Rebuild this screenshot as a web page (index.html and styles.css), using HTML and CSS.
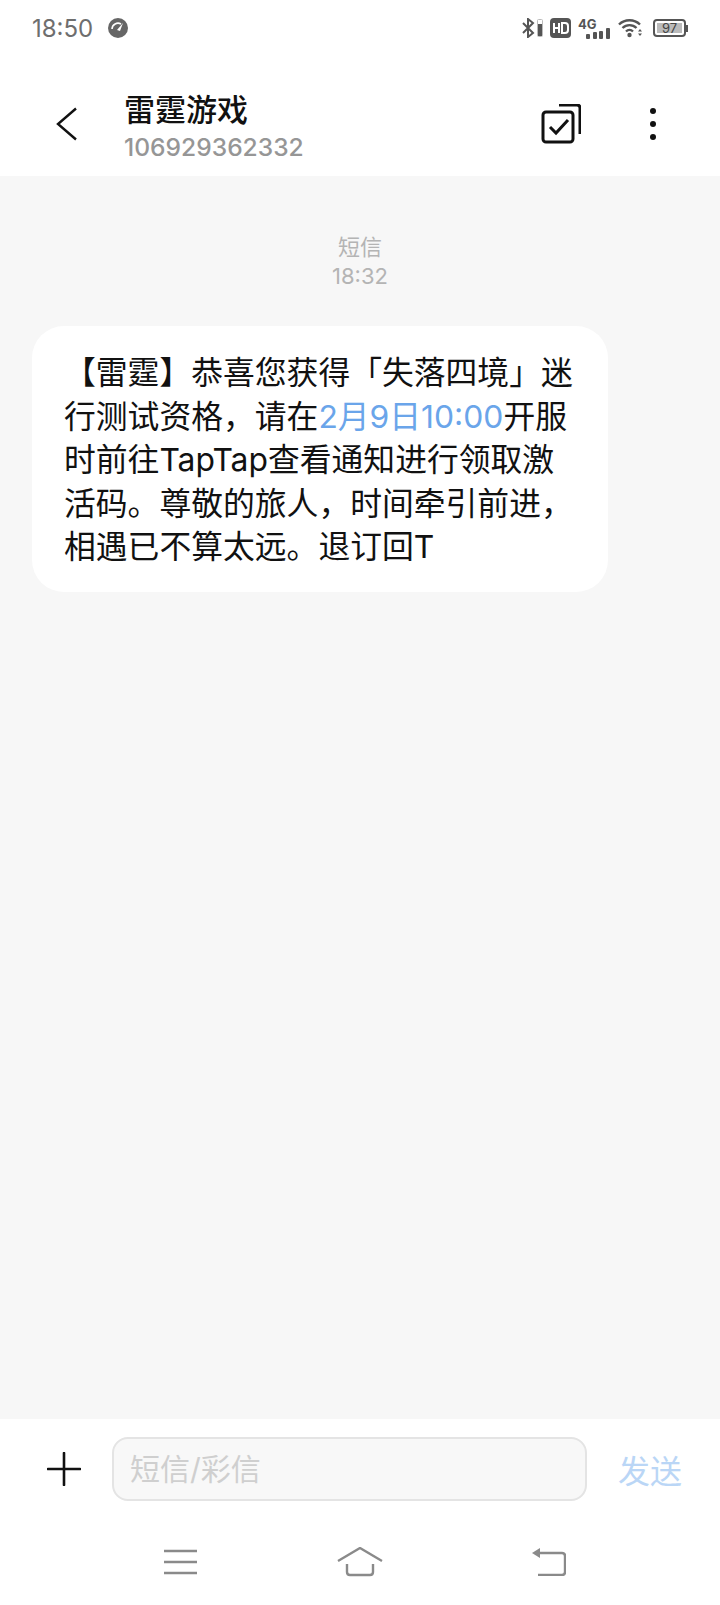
FILE: index.html
```html
<!DOCTYPE html>
<html lang="zh-CN">
<head>
  <meta charset="UTF-8">
  <title>雷霆游戏</title>
  <link rel="stylesheet" href="styles.css">
</head>
<body>

<div class="phone">
  <div class="status-bar">
    <div class="status-left">
      <span class="clock">18:50</span>
      <svg class="gauge" width="20" height="20" viewBox="0 0 20 20">
        <circle cx="10" cy="10" r="10" fill="#666"/>
        <path d="M4 11a6 6 0 0 1 9-5" fill="none" stroke="#fff" stroke-width="1.6"/>
        <path d="M9 12l6-7-3 8z" fill="#fff"/>
      </svg>
    </div>
    <div class="status-right">
      <svg width="21" height="20" viewBox="0 0 21 20">
        <path d="M1 5l10 10-5 4V1l5 4L1 15" fill="none" stroke="#555" stroke-width="2"/>
        <rect x="15.5" y="1.5" width="5" height="17" rx="1" fill="#fff" stroke="#bbb"/>
        <rect x="16" y="6" width="4" height="12" fill="#555"/>
      </svg>
      <svg width="21" height="20" viewBox="0 0 21 20">
        <rect width="21" height="20" rx="4" fill="#555"/>
        <path d="M4 5v10M9 5v10M4 10h5" stroke="#fff" stroke-width="2" fill="none"/>
        <path d="M12 5h3q3 0 3 3v4q0 3-3 3h-3z" stroke="#fff" stroke-width="2" fill="none"/>
      </svg>
      <div class="signal">
        <span class="net">4G</span>
        <svg width="24" height="11" viewBox="0 0 24 11">
          <rect x="0" y="6" width="4" height="5" rx="1" fill="#555"/>
          <rect x="7" y="4" width="4" height="7" rx="1" fill="#555"/>
          <rect x="13" y="3" width="4" height="8" rx="1" fill="#555"/>
          <rect x="20" y="0" width="4" height="11" rx="1" fill="#555"/>
        </svg>
      </div>
      <svg class="wifi" width="25" height="20" viewBox="0 0 25 20">
        <path d="M1 6.500a15 15 0 0 1 21 0M4.500 10a10 10 0 0 1 14 0M8 13.500a5 5 0 0 1 7 0" fill="none" stroke="#555" stroke-width="2.400"/>
        <circle cx="11.500" cy="17" r="2.200" fill="#555"/>
        <path d="M22 11l2 2.500h-4zM22 18l2-2.500h-4z" fill="#555"/>
      </svg>
      <div class="battery">
        <div class="battery-body"><span class="battery-fill">97</span></div>
        <div class="battery-tip"></div>
      </div>
    </div>
  </div>

  <div class="header">
    <svg class="back" width="22" height="34" viewBox="0 0 22 34">
      <path d="M20 1.500L2 17l18 15.500" fill="none" stroke="#111" stroke-width="2.400"/>
    </svg>
    <div class="contact">
      <div class="contact-name">雷霆游戏</div>
      <div class="contact-number">106929362332</div>
    </div>
    <svg class="select" width="40" height="40" viewBox="0 0 40 40">
      <path d="M18 1h18q3 0 3 3v26" fill="none" stroke="#111" stroke-width="3"/>
      <rect x="2" y="8" width="30" height="30" rx="3" fill="#fff" stroke="#111" stroke-width="3"/>
      <path d="M9 23l6 6 12-13" fill="none" stroke="#111" stroke-width="3"/>
    </svg>
    <div class="more"><i></i><i></i><i></i></div>
  </div>

  <div class="thread">
    <div class="stamp">短信<br>18:32</div>
    <div class="bubble">【雷霆】恭喜您获得「失落四境」迷<br>行测试资格，请在<span class="link">2月9日10:00</span>开服<br>时前往TapTap查看通知进行领取激<br>活码。尊敬的旅人，时间牵引前进，<br>相遇已不算太远。退订回T</div>
  </div>

  <div class="composer">
    <svg class="plus" width="34" height="34" viewBox="0 0 34 34">
      <path d="M17 1v32M1 17h32" stroke="#111" stroke-width="2.600" stroke-linecap="round"/>
    </svg>
    <div class="input">短信/彩信</div>
    <div class="send">发送</div>
  </div>

  <div class="nav">
    <svg width="33" height="26" viewBox="0 0 33 26">
      <path d="M0 2h33M0 13h33M0 24h33" stroke="#8a8a8a" stroke-width="2.400"/>
    </svg>
    <svg class="home" width="46" height="30" viewBox="0 0 46 30">
      <path d="M1 14L23 1l22 13" fill="none" stroke="#8a8a8a" stroke-width="2.400"/>
      <path d="M10 17v8q0 3 3 3h20q3 0 3-3v-8" fill="none" stroke="#8a8a8a" stroke-width="2.400"/>
    </svg>
    <svg width="34" height="28" viewBox="0 0 34 28">
      <path d="M0 5l8-5v10z" fill="#8a8a8a"/>
      <path d="M6 5h24q3 0 3 3v16q0 3-3 3H6" fill="none" stroke="#8a8a8a" stroke-width="2.400"/>
    </svg>
  </div>
</div>

</body>
</html>
```

FILE: styles.css
```css
* {
  box-sizing: border-box;
}

body {
  margin: 0;
  background: #fff;
  font-family: Inter, 'Noto Sans CJK SC', sans-serif;
  text-spacing-trim: space-all;
}

.phone {
  display: flex;
  flex-direction: column;
  width: 720px;
  height: 1605px;
  overflow: hidden;
}

.status-bar {
  display: flex;
  justify-content: space-between;
  align-items: center;
  height: 56px;
  padding: 0 32px;
}

.status-left {
  display: flex;
  align-items: center;
  gap: 15px;
}

.clock {
  font-size: 24px;
  color: #6e6e6e;
}

.status-right {
  display: flex;
  align-items: center;
  gap: 7px;
}

.signal {
  display: flex;
  flex-direction: column;
  align-items: flex-start;
  width: 32px;
  line-height: 1;
}

.signal svg {
  align-self: flex-end;
  margin-top: -3px;
}

.net {
  font-size: 13px;
  font-weight: 700;
  color: #555;
}

.wifi {
  margin-left: 1px;
}

.battery {
  display: flex;
  align-items: center;
  margin-left: 3px;
}

.battery-body {
  width: 33px;
  height: 18px;
  padding: 2px;
  border: 2px solid #555;
  border-radius: 4px;
}

.battery-fill {
  display: block;
  height: 10px;
  background: #bbb;
  color: #444;
  font-size: 13px;
  line-height: 10px;
  text-align: center;
}

.battery-tip {
  width: 2px;
  height: 7px;
  background: #555;
}

.header {
  display: flex;
  align-items: center;
  height: 120px;
  padding-left: 56px;
}

.back {
  margin-top: 16px;
}

.contact {
  flex: 1;
  margin: 17px 0 0 46px;
}

.contact-name {
  font-size: 31px;
  font-weight: 500;
  line-height: 44px;
  color: #111;
}

.contact-number {
  font-size: 24.600px;
  font-weight: 500;
  line-height: 30px;
  color: #969696;
}

.select {
  margin-top: 15px;
}

.more {
  display: flex;
  flex-direction: column;
  gap: 7px;
  margin: 16px 64px 0 69px;
}

.more i {
  width: 6px;
  height: 6px;
  border-radius: 50%;
  background: #111;
}

.thread {
  flex: 1;
  padding: 0 32px;
  background: #f7f7f7;
}

.stamp {
  margin-top: 57px;
  font-size: 22px;
  line-height: 29px;
  text-align: center;
  color: #b4b4b4;
}

.bubble {
  width: 576px;
  height: 266px;
  margin-top: 35px;
  padding: 25px 0 0 32px;
  background: #fff;
  border-radius: 32px;
  font-size: 31.800px;
  line-height: 43.600px;
  color: #111;
  white-space: nowrap;
}

.link {
  color: #6aa5ea;
}

.composer {
  display: flex;
  align-items: center;
  height: 100px;
  padding-left: 47px;
}

.plus {
  flex: none;
}

.input {
  width: 475px;
  height: 64px;
  margin-left: 31px;
  padding-left: 16px;
  background: #f8f8f8;
  border: 2px solid #e4e4e4;
  border-radius: 16px;
  font-size: 30px;
  line-height: 60px;
  color: #cfcfcf;
}

.send {
  margin-left: 31px;
  font-size: 32px;
  color: #bad6f6;
}

.nav {
  display: flex;
  justify-content: space-between;
  align-items: center;
  height: 86px;
  padding: 0 154px 0 164px;
}

.home {
  margin-right: 10px;
}
```
